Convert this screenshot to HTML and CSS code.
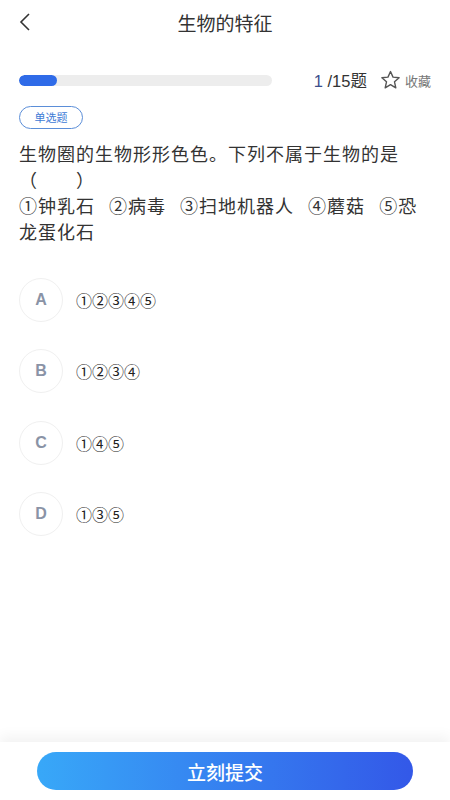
FILE: index.html
```html
<!DOCTYPE html>
<html lang="zh-CN">
<head>
  <meta charset="UTF-8">
  <title>生物的特征</title>
  <link rel="stylesheet" href="styles.css">
</head>
<body>
  <div class="page">
    <!-- 顶部标题 -->
    <div class="nav">
      <svg class="back" width="12" height="18" viewBox="0 0 12 18"><path d="M10 1 L2 9 L10 17" fill="none" stroke="#333" stroke-width="1.6"/></svg>
      <div class="title">生物的特征</div>
    </div>

    <!-- 进度 -->
    <div class="progress-row">
      <div class="track"><div class="fill" style="width: 15%"></div></div>
      <div class="count"><span class="cur">1</span> /15题</div>
      <div class="fav">
        <svg width="21" height="20" viewBox="0 0 24 23"><path d="M12 1.8 L14.9 8.2 L21.9 8.9 L16.6 13.6 L18.1 20.5 L12 16.9 L5.9 20.5 L7.4 13.6 L2.1 8.9 L9.1 8.2 Z" fill="none" stroke="#555" stroke-width="1.6" stroke-linejoin="round"/></svg>
        <span>收藏</span>
      </div>
    </div>

    <div class="tag">单选题</div>

    <div class="question">生物圈的生物形形色色。下列不属于生物的是（　　）<br>①钟乳石 ②病毒 ③扫地机器人 ④蘑菇 ⑤恐龙蛋化石</div>

    <!-- 选项 -->
    <div class="options">
      <div class="option"><div class="letter">A</div><div class="text">①②③④⑤</div></div>
      <div class="option"><div class="letter">B</div><div class="text">①②③④</div></div>
      <div class="option"><div class="letter">C</div><div class="text">①④⑤</div></div>
      <div class="option"><div class="letter">D</div><div class="text">①③⑤</div></div>
    </div>
  </div>

  <div class="footer">
    <button class="submit">立刻提交</button>
  </div>
</body>
</html>
```

FILE: styles.css
```css
body { margin: 0; font-family: "Noto Sans CJK SC", "Noto Sans", sans-serif; background: #fff; color: #333; }
.page { padding: 0 19px; height: 742px; box-sizing: border-box; }
.nav { height: 44px; display: flex; align-items: center; justify-content: center; position: relative; }
.back { position: absolute; left: 0; top: 13px; }
.title { font-size: 19px; color: #333; }
.progress-row { display: flex; align-items: center; margin-top: 20px; height: 32px; }
.track { flex: none; width: 253px; height: 11px; background: #ededed; border-radius: 6px; overflow: hidden; }
.fill { height: 100%; background: #2f6be8; border-radius: 6px; }
.count { margin-left: auto; font-family: "Liberation Sans", "Noto Sans CJK SC", sans-serif; font-size: 16.5px; color: #333; }
.count .cur { color: #3b4f8c; }
.fav { display: flex; align-items: center; margin-left: 13px; font-size: 13px; color: #777; }
.fav svg { margin-right: 4px; }
.tag { display: inline-block; margin-top: 10px; width: 64px; height: 23px; box-sizing: border-box; border: 1px solid #5b8ed8; border-radius: 12px; color: #3d7ad6; font-size: 11px; line-height: 21px; text-align: center; }
.question { margin-top: 11px; font-size: 18px; line-height: 26px; color: #333; letter-spacing: 1px; word-spacing: 9px; }
.options { margin-top: 34px; }
.option { display: flex; align-items: center; height: 44px; margin-bottom: 27.3px; }
.letter { width: 44px; height: 44px; box-sizing: border-box; border: 1px solid #f0f0f0; border-radius: 50%; display: flex; align-items: center; justify-content: center; font-family: "Liberation Sans", sans-serif; font-weight: bold; font-size: 16px; color: #8a93a6; }
.text { margin-left: 13px; font-size: 16px; color: #222; }
.footer { height: 58px; background: #fff; box-shadow: 0 -6px 12px rgba(0,0,0,0.05); display: flex; justify-content: center; padding-top: 10px; box-sizing: border-box; }
.submit { width: 376px; height: 38px; border: none; border-radius: 19px; background: linear-gradient(90deg, #38a8f8, #3358e8); color: #fff; font-family: "Noto Sans CJK SC", sans-serif; font-size: 19px; font-weight: 500; cursor: pointer; }
```
